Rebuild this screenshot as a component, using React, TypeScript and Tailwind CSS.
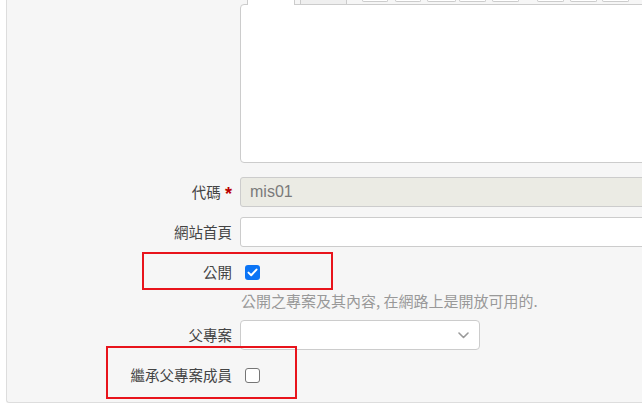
import React from 'react'

const toolbarButtons = [
    {left: 15, width: 26},
    {left: 7, width: 26},
    {left: 6, width: 29},
    {left: 3, width: 27},
    {left: 6, width: 27},
    {left: 18, width: 27},
    {left: 6, width: 27},
    {left: 5, width: 27},
]

function Label({children}: {children: React.ReactNode}) {
    return (
        <div className="w-[225px] shrink-0 text-right text-[14.5px] text-[#444]">
            {children}
        </div>
    )
}

function Checkbox({checked}: {checked?: boolean}) {
    if (checked) {
        return (
            <div className="flex h-[15px] w-[15px] items-center justify-center rounded-[3px] bg-[#0b74f5]">
                <svg width="11" height="9" viewBox="0 0 11 9" fill="none">
                    <path d="M1.5 4.6 L4.2 7.2 L9.5 1.6" stroke="white" strokeWidth="2" strokeLinecap="round" strokeLinejoin="round"/>
                </svg>
            </div>
        )
    }
    return <div className="h-[15px] w-[15px] rounded-[3px] border border-[#767676] bg-white"/>
}

export default function App() {
    return (
        <div
            className="h-[417px] w-[642px] overflow-hidden bg-white"
            style={{fontFamily: '"Noto Sans CJK TC", "Liberation Sans", sans-serif'}}
        >
            <div className="ml-[6px] w-[720px] rounded-bl-[3px] border-b border-l border-[#dddddd] bg-[#f6f6f6] pb-[12px]">
                {/* editor */}
                <div className="flex gap-[8px]">
                    <div className="w-[225px] shrink-0"/>
                    <div className="flex flex-1 flex-col">
                        <div className="flex h-[4px] items-start">
                            <div className="w-[7px] shrink-0"/>
                            <div className="relative z-10 h-[5px] w-[48px] shrink-0 border-x border-[#cccccc] bg-white"/>
                            <div className="w-[5px] shrink-0"/>
                            <div className="h-[4px] w-[47px] shrink-0 border-x border-[#cccccc] bg-[#efefef]"/>
                            {toolbarButtons.map((b, i) => (
                                <div
                                    key={i}
                                    className="h-[2px] shrink-0 rounded-b-[3px] border-x border-b border-[#cccccc] bg-white"
                                    style={{marginLeft: b.left, width: b.width}}
                                />
                            ))}
                        </div>
                        <div className="h-[159px] rounded-[4px] border border-[#cccccc] bg-white"/>
                    </div>
                </div>

                {/* 代碼 */}
                <div className="mt-[14px] flex items-center gap-[8px]">
                    <Label>
                        代碼 <span className="ml-[1px] inline-block translate-y-[2px] text-[18px] font-bold leading-none text-[#bb0000]" style={{fontFamily: '"Liberation Sans", sans-serif'}}>*</span>
                    </Label>
                    <div
                        className="flex h-[30px] flex-1 items-center rounded-[3px] border border-[#cccccc] bg-[#ebebe4] pl-[9px] text-[16px] text-[#7a7a7a]"
                        style={{fontFamily: '"Liberation Sans", Arial, sans-serif'}}
                    >
                        mis01
                    </div>
                </div>

                {/* 網站首頁 */}
                <div className="mt-[10px] flex items-center gap-[8px]">
                    <Label>網站首頁</Label>
                    <div className="h-[30px] flex-1 rounded-[3px] border border-[#cccccc] bg-white"/>
                </div>

                {/* 公開 */}
                <div className="relative mt-[10px] flex h-[30px] items-center gap-[8px]">
                    <Label>公開</Label>
                    <div className="pl-[5px]">
                        <Checkbox checked/>
                    </div>
                    <div className="absolute left-[135px] top-[-5px] h-[38px] w-[191px] border-2 border-[#e8141c]"/>
                </div>
                <div className="mt-[4px] flex h-[20px] items-center gap-[8px]">
                    <div className="w-[225px] shrink-0"/>
                    <div className="pl-[1px] text-[15px] text-[#999999]">
                        公開之專案及其內容, 在網路上是開放可用的.
                    </div>
                </div>

                {/* 父專案 */}
                <div className="mt-[9px] flex items-center gap-[8px]">
                    <Label>父專案</Label>
                    <div className="flex h-[30px] w-[240px] items-center justify-end rounded-[4px] border border-[#cccccc] bg-white pr-[10px]">
                        <svg width="11" height="7" viewBox="0 0 11 7" fill="none">
                            <path d="M1 1 L5.5 5.5 L10 1" stroke="#9a9a9a" strokeWidth="1.6" strokeLinecap="round" strokeLinejoin="round"/>
                        </svg>
                    </div>
                </div>

                {/* 繼承父專案成員 */}
                <div className="relative mt-[10px] flex h-[30px] items-center gap-[8px]">
                    <Label>繼承父專案成員</Label>
                    <div className="pl-[5px]">
                        <Checkbox/>
                    </div>
                    <div className="absolute left-[99px] top-[-14px] h-[53px] w-[191px] border-2 border-[#e8141c]"/>
                </div>
            </div>
        </div>
    )
}
